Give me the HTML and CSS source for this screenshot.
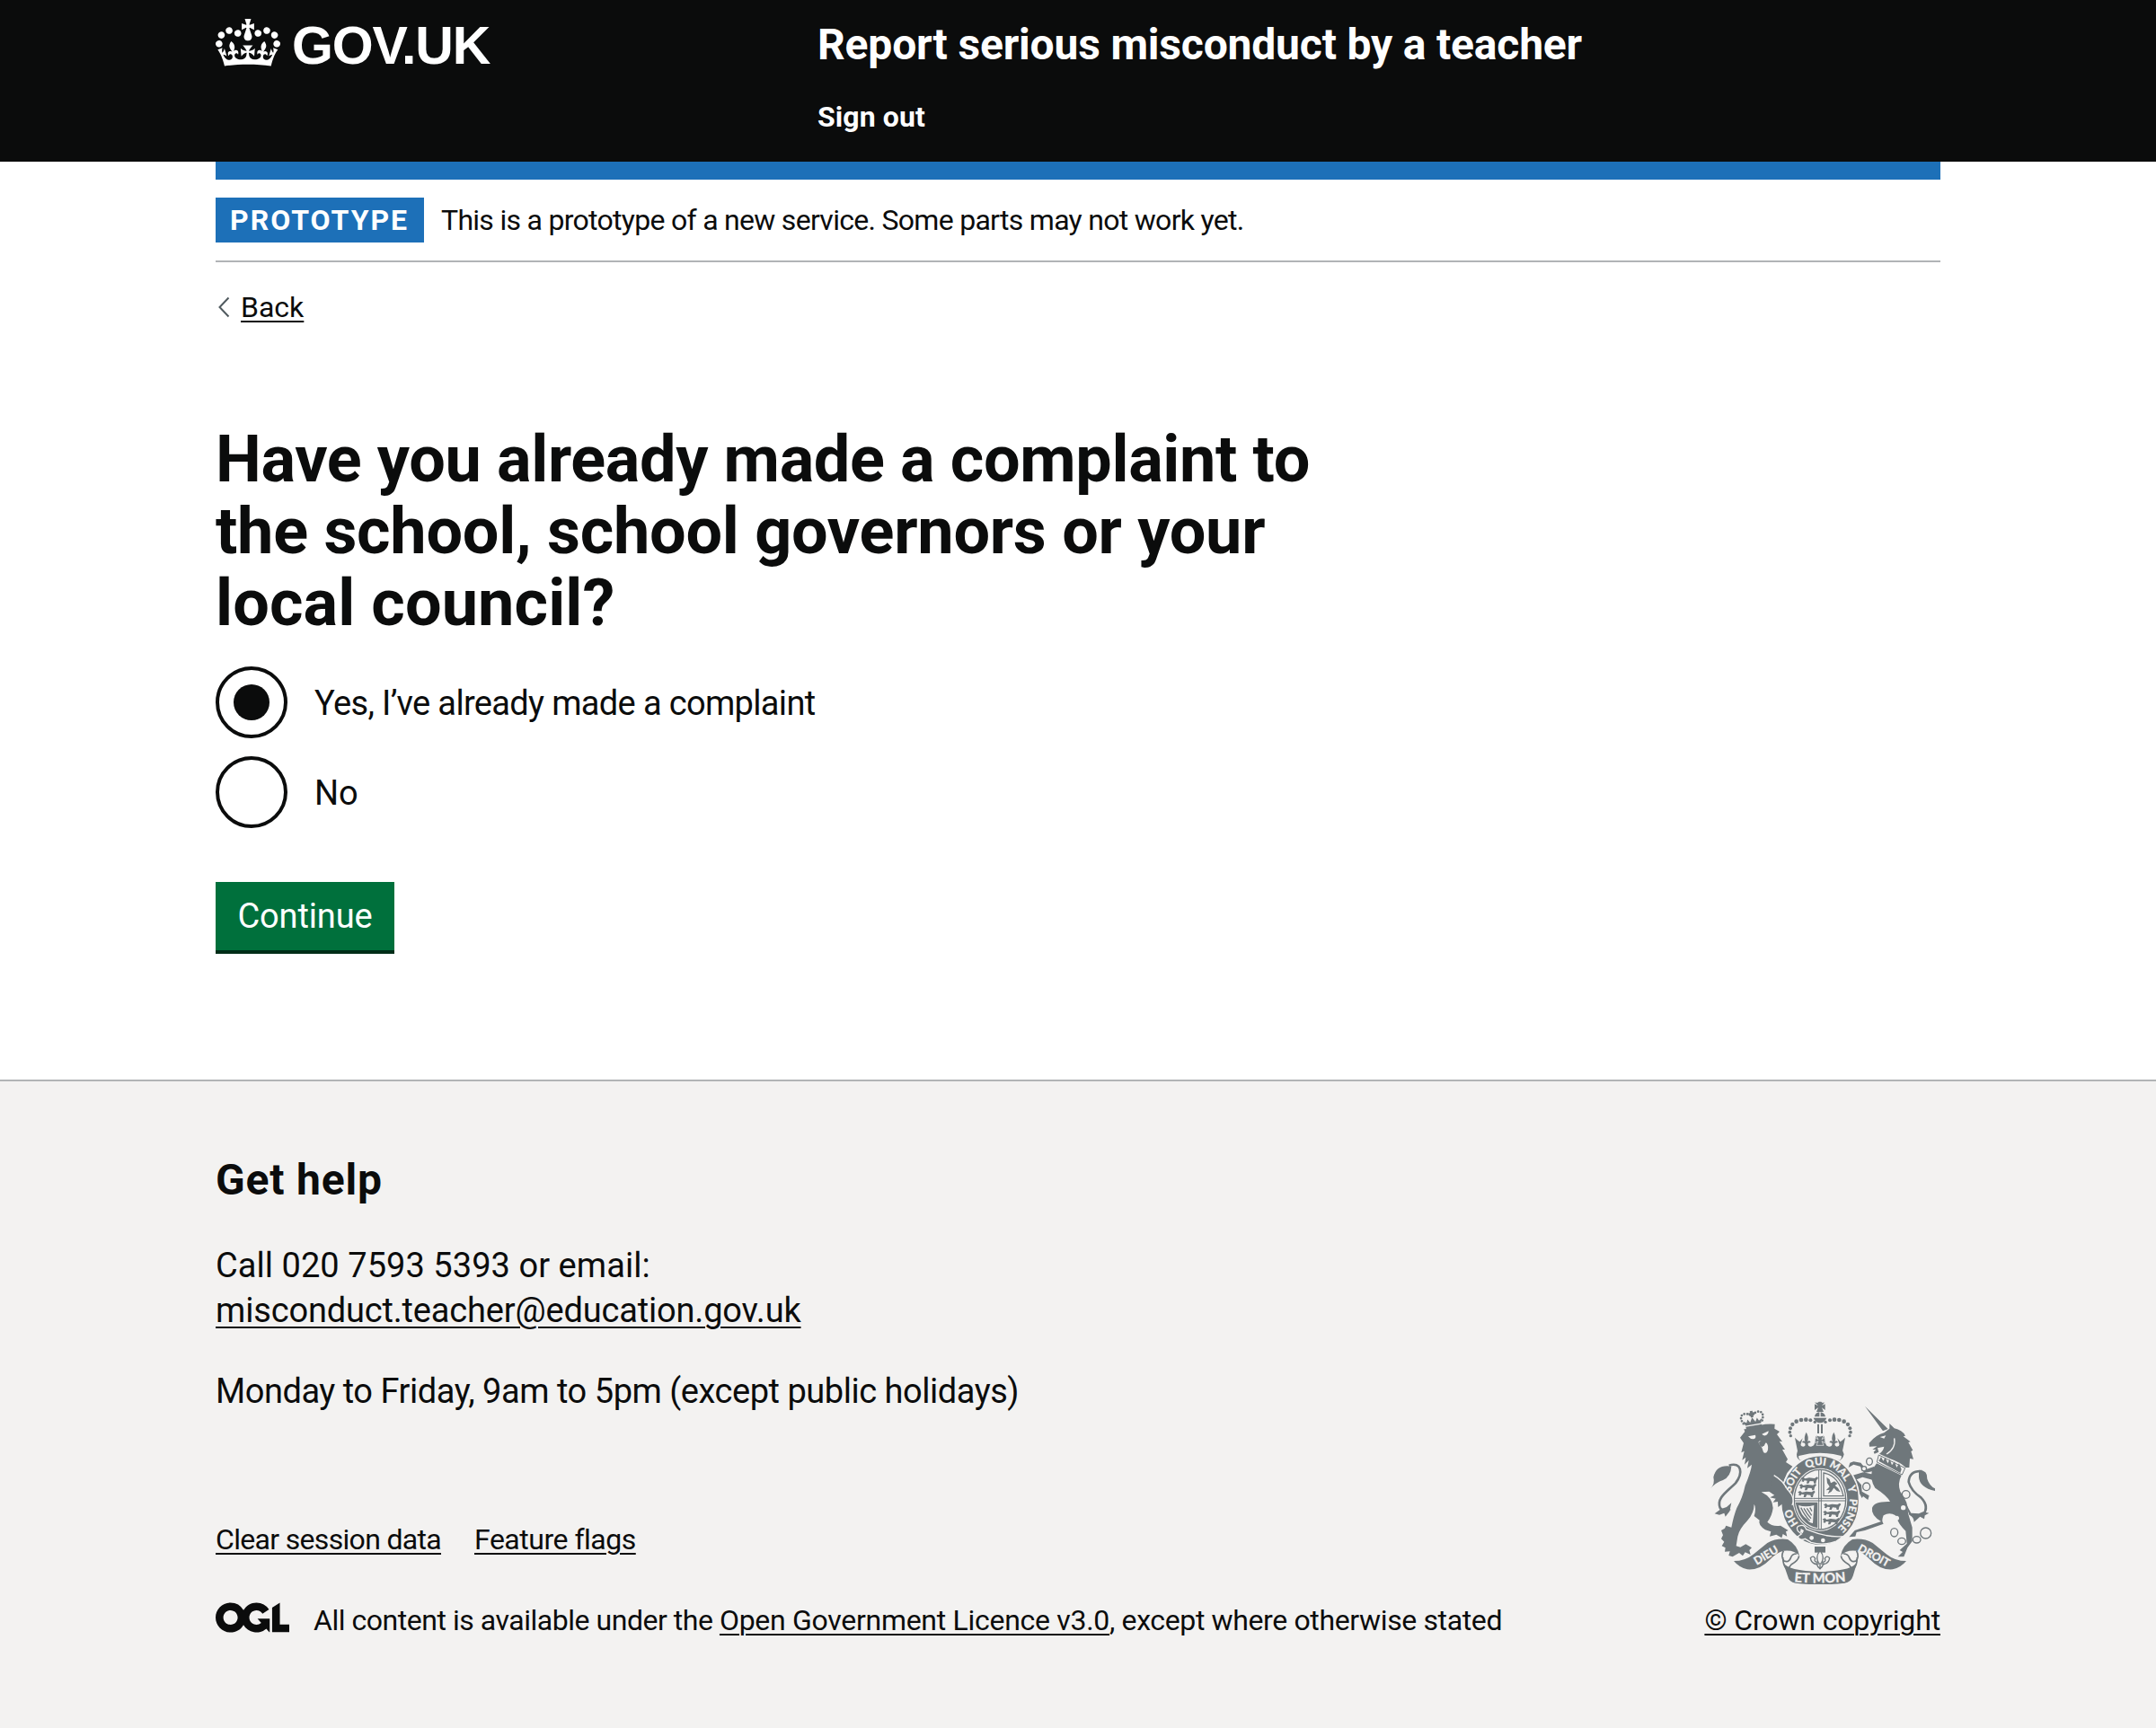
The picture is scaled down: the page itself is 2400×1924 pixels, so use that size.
FILE: index.html
```html
<!DOCTYPE html>
<html lang="en">
<head>
<meta charset="utf-8">
<title>Have you already made a complaint? – Report serious misconduct by a teacher</title>
<link rel="stylesheet" href="styles.css">
</head>
<body>
<header class="header">
  <div class="container header-row">
    <a class="logo" href="#">
      <svg class="crown" viewBox="0 0 132 97" aria-hidden="true"><path fill="currentColor" fill-rule="evenodd" d="M25 30.2c3.5 1.5 7.7-.2 9.1-3.7 1.5-3.6-.2-7.8-3.9-9.2-3.6-1.4-7.6.3-9.1 3.9-1.4 3.5.3 7.5 3.9 9zM9 39.5c3.6 1.5 7.8-.2 9.2-3.7 1.5-3.6-.2-7.8-3.9-9.1-3.6-1.5-7.6.2-9.1 3.8-1.4 3.5.3 7.5 3.8 9zM4.4 57.2c3.5 1.5 7.7-.2 9.1-3.8 1.5-3.6-.2-7.7-3.9-9.1-3.5-1.5-7.6.3-9.1 3.8-1.4 3.5.3 7.6 3.9 9.1zm38.3-21.4c3.5 1.5 7.7-.2 9.1-3.8 1.5-3.6-.2-7.7-3.9-9.1-3.6-1.5-7.6.3-9.1 3.8-1.3 3.6.4 7.7 3.9 9.1zm64.4-5.6c-3.6 1.5-7.8-.2-9.1-3.7-1.5-3.6.2-7.8 3.8-9.2 3.6-1.4 7.7.3 9.2 3.9 1.3 3.5-.4 7.5-3.9 9zm15.9 9.3c-3.6 1.5-7.7-.2-9.1-3.7-1.5-3.6.2-7.8 3.7-9.1 3.6-1.5 7.7.2 9.2 3.8 1.5 3.5-.3 7.5-3.8 9zm4.7 17.7c-3.6 1.5-7.8-.2-9.2-3.8-1.5-3.6.2-7.7 3.9-9.1 3.6-1.5 7.7.3 9.2 3.8 1.3 3.5-.4 7.6-3.9 9.1zM89.3 35.8c-3.6 1.5-7.8-.2-9.2-3.8-1.4-3.6.2-7.7 3.9-9.1 3.6-1.5 7.7.3 9.2 3.8 1.4 3.6-.3 7.7-3.9 9.1zM69.7 17.7l8.9 4.7V9.3l-8.9 2.8c-.2-.3-.5-.6-.9-.9L72.4 0H59.6l3.5 11.2c-.3.3-.6.5-.9.9l-8.8-2.8v13.1l8.8-4.7c.3.3.6.7.9.9l-5 15.4v.1c-.2.8-.4 1.6-.4 2.4 0 4.1 3.1 7.5 7 8.1h.2c.3 0 .7.1 1 .1.4 0 .7 0 1-.1h.2c4-.6 7.1-4.1 7.1-8.1 0-.8-.1-1.7-.4-2.4V34l-5.1-15.4c.4-.2.7-.6 1-.9zM66 92.8c16.9 0 32.8 1.1 47.1 3.2 4-16.9 8.9-26.7 14-33.5l-9.6-3.4c1 4.9 1.1 7.2 0 10.2-1.5-1.4-3-4.3-4.2-8.7L108.6 76c2.8-2 5-3.2 7.5-3.3-4.4 9.4-10 11.9-13.6 11.2-4.3-.8-6.3-4.6-5.6-7.9 1-4.7 5.7-5.9 8-.5 4.3-8.7-3-11.4-7.6-8.8 7.1-7.2 7.9-13.5 2.1-21.1-8 6.1-8.1 12.3-4.5 20.8-4.7-5.4-12.1-2.5-9.5 6.2 3.4-5.2 7.9-2 7.2 3.1-.6 4.3-6.4 7.8-13.5 7.2-10.3-.9-10.9-8-11.2-13.8 2.5-.5 7.1 1.8 11 7.3L80.2 60c-4.1 4.4-8 5.3-12.3 5.4 1.4-4.4 8-11.6 8-11.6H55.5s6.4 7.2 7.9 11.6c-4.2-.1-8-1-12.3-5.4l1.4 16.4c3.9-5.5 8.5-7.7 10.9-7.3-.3 5.8-.9 12.8-11.1 13.8-7.2.6-12.9-2.9-13.5-7.2-.7-5 3.8-8.3 7.1-3.1 2.7-8.7-4.6-11.6-9.4-6.2 3.7-8.5 3.6-14.7-4.6-20.8-5.8 7.6-5 13.9 2.2 21.1-4.7-2.6-11.9.1-7.7 8.8 2.3-5.5 7.1-4.2 8.1.5.7 3.3-1.3 7.1-5.7 7.9-3.5.7-9-1.8-13.5-11.2 2.5.1 4.7 1.3 7.5 3.3l-4.7-15.4c-1.2 4.4-2.7 7.2-4.3 8.7-1.1-3-.9-5.3 0-10.2l-9.5 3.4c5 6.9 9.9 16.7 14 33.5 14.8-2.1 30.8-3.2 47.7-3.2z"/></svg>
      <span class="logo-text">GOV.UK</span>
    </a>
    <div class="header-content">
      <a class="service-name" href="#">Report serious misconduct by a teacher</a>
      <a class="sign-out" href="#">Sign out</a>
    </div>
  </div>
</header>

<div class="container">
  <div class="phase-banner">
    <strong class="tag">PROTOTYPE</strong>
    <span class="phase-text">This is a prototype of a new service. Some parts may not work yet.</span>
  </div>
  <a class="back-link" href="#">
    <svg class="chevron" viewBox="0 0 14 24" aria-hidden="true"><path d="M12.5 1.5 2.5 12l10 10.500" fill="none" stroke="#505a5f" stroke-width="2"/></svg>
    <span class="back-text">Back</span>
  </a>

  <main class="main">
    <h1 class="heading"><span class="line-a">Have you already made a complaint to</span><br><span class="line-b">the school, school governors or your</span><br><span class="line-c">local council?</span></h1>
    <div class="radios">
      <label class="radio"><span class="radio-dot radio-dot-on"></span><span class="radio-label radio-label-yes">Yes, I’ve already made a complaint</span></label>
      <label class="radio"><span class="radio-dot"></span><span class="radio-label">No</span></label>
    </div>
    <button class="button" type="button">Continue</button>
  </main>
</div>

<footer class="footer">
  <div class="container footer-row">
    <div class="footer-main">
      <h2 class="footer-heading">Get help</h2>
      <p class="footer-copy">Call 020 7593 5393 or email:<br><a class="link email" href="#">misconduct.teacher@education.gov.uk</a></p>
      <p class="footer-copy hours">Monday to Friday, 9am to 5pm (except public holidays)</p>
      <div class="footer-links">
        <a class="link link-clear" href="#">Clear session data</a>
        <a class="link link-flags" href="#">Feature flags</a>
      </div>
      <div class="licence">
        <svg class="ogl" viewBox="0 0 483.2 195.7" aria-hidden="true"><path fill="currentColor" d="M421.5 142.8V.1l-50.7 32.3v161.1h112.4v-50.7zm-122.3-9.6A47.12 47.12 0 0 1 221 97.8c0-26 21.1-47.1 47.1-47.1 16.7 0 31.4 8.7 39.7 21.8l42.7-27.2A97.63 97.63 0 0 0 268.1 0c-36.5 0-68.3 20.1-85.1 49.7A98 98 0 0 0 97.8 0C43.9 0 0 43.9 0 97.8s43.9 97.8 97.8 97.8c36.5 0 68.3-20.1 85.1-49.7a97.76 97.76 0 0 0 149.6 25.4l19.4 22.2h3v-87.8h-80l24.3 27.500zM97.8 145c-26 0-47.1-21.1-47.1-47.1s21.1-47.1 47.1-47.1 47.1 21.1 47.1 47.1S123.8 145 97.8 145"/></svg>
        <p class="licence-text"><span class="licence-a">All content is available under the </span><a class="link licence-b" href="#">Open Government Licence v3.0</a><span class="licence-c">, except where otherwise stated</span></p>
      </div>
    </div>
    <div class="copyright">
      <svg class="arms" viewBox="42 28 750 612" aria-hidden="true">
        <defs>
          <path id="garter" d="M408 474A99 116 0 0 1 408 242A99 116 0 0 1 408 474"/>
          <path id="motto" d="M300 629Q408 642 516 627"/>
          <g id="pearls">
            <circle cx="391" cy="98" r="5"/><circle cx="376" cy="92" r="6"/><circle cx="361" cy="90" r="7"/><circle cx="345" cy="91" r="7"/><circle cx="329" cy="96" r="7"/><circle cx="316" cy="106" r="6.500"/><circle cx="309" cy="119" r="6"/><circle cx="307" cy="132" r="5.500"/><circle cx="310" cy="144" r="5"/>
          </g>
          <g id="crown-half">
            <path d="M324 150L332 158L340 164L350 152L345 168Q340 178 352 180Q362 178 357 168L348 166Q352 158 358 163Q353 148 362 132Q372 148 366 163Q374 158 377 166L368 168Q366 180 378 180Q390 178 390 166L394 146H408V200H334Z"/>
          </g>
          <g id="ribbon">
            <path d="M120 562Q158 562 185 540L232 502Q262 485 300 490Q332 508 339 545Q322 524 286 528Q264 533 240 558Q205 594 165 590Q138 584 120 562Z"/>
            <path d="M338 545Q336 560 312 574Q300 586 308 596M286 528Q276 548 288 562Q304 568 310 552Q314 538 330 538M284 550Q284 576 296 588" fill="none" stroke="#6f777b" stroke-width="5"/>
          </g>
          <g id="guardant">
            <path d="M0 4l8-4 6 5 14-3 18 2 8-5 4 4-6 8-2 10h-6l-2-7-12-1-4 8h-7l2-9-9-1-3 5-7-2 3-5z"/>
          </g>
        </defs>
        <g fill="#6f777b">
          <!-- lion -->
          <path d="M141 150L157 130L154 122L168 121Q215 101 257 105L256 120L273 130L264 139L282 164L272 162L291 190L282 190L300 222L294 232L316 246L298 268L288 292L300 330L268 350L238 330L212 332Q250 350 251 385Q248 412 232 432Q248 448 276 444L302 460L294 464L298 480L284 472L280 485L262 474L240 480L244 464L225 458Q200 440 206 426L188 412Q196 385 188 372Q188 402 165 428Q138 456 133 480L128 512L142 516L160 506L180 518L172 526L176 541L158 533L150 545L138 535L116 548L103 544L107 530L90 531L92 518L80 512L88 498L78 488L84 476L78 460L90 453L94 444L112 450Q120 410 130 385Q150 350 158 310Q178 262 180 240L165 252L170 226L156 240L160 216L148 225L155 195L145 200L153 168Z"/>
          <path d="M42 320Q58 304 52 282Q62 238 112 246Q110 280 84 292Q60 300 42 320ZM56 404L78 388L96 382L112 368L106 396L92 414L88 402L72 408Z"/>
          <path d="M104 243C146 230 152 268 126 302C96 332 62 352 74 384Q82 400 108 388" fill="none" stroke="#6f777b" stroke-width="8"/>
          <g transform="rotate(-10 185 100)">
            <path d="M158 106L152 90L163 97L168 86L175 98L184 82L193 98L200 86L205 97L216 90L210 106ZM158 110H212V122H158ZM180 60H189V66H195V74H189V82H180V74H174V66H180Z"/>
            <g fill="none" stroke="#6f777b" stroke-width="8" stroke-linecap="round" stroke-dasharray="0 10"><path d="M152 98C136 64 164 60 180 74"/><path d="M216 98C232 64 204 60 188 74"/></g>
          </g>
          <g fill="#f3f2f1">
            <path d="M168 146L192 141Q196 152 186 155Q176 156 168 146ZM214 138L236 128Q236 139 226 143Q218 144 214 138ZM204 170Q200 160 210 162L230 168Q238 180 232 196Q226 206 219 198L214 184Z"/>
          </g>
          <path d="M203 166Q216 156 227 166L222 176L214 182L207 176Z"/>

          <!-- unicorn -->
          <path d="M558 45L635 121L618 128ZM572 168Q596 140 622 134L640 120V103L656 119Q682 124 693 144L686 146L710 164L703 166L718 192L712 196L720 222L708 220L706 250L694 250Q676 232 640 220L606 204Q620 194 622 180L600 185L604 198L590 204L587 198L595 190L583 190L598 179L573 180Z"/>
          <path d="M656 152Q662 186 630 205" fill="none" stroke="#f3f2f1" stroke-width="4"/>
          <path d="M608 148L628 143L622 153Z" fill="#f3f2f1"/>
          <path d="M604 208L692 252L682 274L598 232Z" fill="#f3f2f1" stroke="#6f777b" stroke-width="3"/>
          <path d="M604 228L612 214L619 228L626 216L634 236L641 222L648 242L657 230L664 250L672 236L680 256L676 268Z"/>
          <path d="M597 236L680 276Q666 302 676 330Q704 366 702 402L716 450V496L700 518L688 548L668 548L684 532L674 526L698 504L694 462Q670 440 660 410Q640 398 620 410Q612 428 620 438L558 460L530 466L526 480L505 482L524 460L612 430Q578 410 582 385Q588 362 642 364Q632 344 592 318Q574 290 582 258Z"/>
          <path d="M586 262L556 268L542 246L520 240L503 250L508 234L520 230L544 234L562 256L590 246ZM586 292L550 282L530 290L546 308L548 330L572 344L568 358L552 346L548 352L530 318L508 288L512 278L552 266L590 274Z"/>
          <path d="M748 262Q706 260 704 298Q712 328 745 350Q774 380 752 408" fill="none" stroke="#6f777b" stroke-width="8"/>
          <path d="M738 258Q768 258 766 288Q774 312 792 320V328Q740 316 738 282ZM690 362L712 402L738 404L752 398L772 402L758 410L756 422L742 414L722 432Q722 416 706 408Z"/>
          <g fill="none" stroke="#6f777b" stroke-width="4">
            <ellipse cx="573" cy="230" rx="10" ry="12"/><circle cx="555" cy="254" r="8" fill="#f3f2f1"/><ellipse cx="563" cy="314" rx="12" ry="13"/><circle cx="695" cy="340" r="13"/><ellipse cx="656" cy="467" rx="12" ry="14"/><ellipse cx="681" cy="496" rx="13" ry="11"/><ellipse cx="731" cy="491" rx="13" ry="11"/><circle cx="761" cy="469" r="18"/>
          </g>
          <g fill="#f3f2f1"><circle cx="686" cy="384" r="8"/><circle cx="664" cy="419" r="8"/></g>

          <!-- crown -->
          <path d="M390 32Q400 36 404 30H412Q416 36 424 32L414 44L425 38V58L414 50L420 64H396L402 50L390 58V38L402 44ZM390 80Q392 66 406 65V80ZM410 65Q424 68 426 80H410ZM386 84H430Q424 100 408 101Q392 100 386 84Z"/>
          <path d="M402 105V136M414 105V136" stroke="#6f777b" stroke-width="6" fill="none"/>
          <use href="#pearls"/><use href="#pearls" transform="matrix(-1 0 0 1 817 0)"/>
          <use href="#crown-half"/><use href="#crown-half" transform="matrix(-1 0 0 1 816 0)"/>
          <path d="M395 142Q408 150 421 142L414 156L424 150V168L414 162L420 176H396L402 162L392 168V150L402 156Z" stroke="#f3f2f1" stroke-width="2"/>
          <path d="M334 190Q408 170 482 190L488 206Q484 222 472 228Q408 190 344 228Q330 222 330 206Z"/>
          <path d="M337 211Q408 192 479 211Q482 222 472 226Q408 204 344 226Q334 222 337 211Z" fill="#f3f2f1"/>

          <!-- garter and shield -->
          <path d="M408 210A131 150 0 0 1 408 510A131 150 0 0 1 408 210Z" stroke="#f3f2f1" stroke-width="5"/>
          <ellipse cx="408" cy="357" rx="91" ry="105" fill="#f3f2f1"/>
          <ellipse cx="408" cy="357" rx="86" ry="100" fill="none" stroke="#6f777b" stroke-width="4"/>
          <path d="M404 258V454M412 258V454M322 353H494M322 361H494" stroke="#6f777b" stroke-width="3"/>
          <use href="#guardant" x="344" y="282"/><use href="#guardant" x="338" y="305"/><use href="#guardant" x="334" y="328"/>
          <use href="#guardant" x="420" y="370"/><use href="#guardant" x="418" y="394"/><use href="#guardant" x="416" y="419"/>
          <path d="M420 268Q470 276 486 345H420Z" fill="none" stroke="#6f777b" stroke-width="4"/>
          <path d="M430 282L440 290L444 302L456 296L466 304L458 310L468 318L476 332L464 328L454 318L446 330L434 338L440 324L428 326L440 314L432 302Z"/>
          <path d="M326 366H400V452Q340 440 326 366Z"/>
          <path d="M336 376Q360 384 388 376L384 436Q370 434 366 424Q344 410 336 376Z" fill="#f3f2f1"/>
          <path d="M344 384Q358 412 374 428M354 386Q366 408 378 420M364 386L380 410M374 384L381 396" fill="none" stroke="#6f777b" stroke-width="4"/>
          <g class="arms-text" font-size="35">
            <text><textPath href="#garter" startOffset="16.500%">HO</textPath></text>
            <text><textPath href="#garter" startOffset="34.500%">SOIT</textPath></text>
            <text><textPath href="#garter" startOffset="48%">QUI</textPath></text>
            <text><textPath href="#garter" startOffset="60%">MAL</textPath></text>
            <text><textPath href="#garter" startOffset="70%">Y</textPath></text>
            <text><textPath href="#garter" startOffset="82.500%">PENSE</textPath></text>
          </g>
          <path d="M334 462Q326 446 342 444Q356 440 362 456L378 462Q430 484 486 480L462 496Q420 512 378 500L358 488Q340 496 334 480L346 472Z" stroke="#f3f2f1" stroke-width="4"/>
          <g fill="#f3f2f1"><circle cx="380" cy="485" r="7"/><circle cx="418" cy="493" r="7"/><path d="M344 454l10 6-4 10-8-4z"/></g>
          <!-- lion's foreleg, resting on the garter -->
          <path d="M254 278Q282 294 294 320L312 342Q320 360 314 374L304 388L299 374L290 386L283 371L268 382L267 364L251 366L260 354L241 350L256 342L238 328Z"/>
          <path d="M254 276Q284 294 296 318L314 342Q322 360 315 376" fill="none" stroke="#f3f2f1" stroke-width="4"/>

          <!-- motto ribbon -->
          <use href="#ribbon"/><use href="#ribbon" transform="matrix(-1 0 0 1 816 0)"/>
          <path d="M284 566Q300 596 408 598Q516 596 532 566L518 612Q512 632 490 636Q408 646 326 636Q304 632 300 612Z"/>
          <path d="M390 514H426V534H390Z"/>
          <path d="M408 528Q424 546 414 566Q430 566 424 554Q430 542 440 552Q438 570 418 574Q416 584 408 588Q400 584 398 574Q378 570 376 552Q386 542 392 554Q386 566 402 566Q392 546 408 528Z" fill="#f3f2f1" stroke="#6f777b" stroke-width="4"/>
          <path d="M394 571H422M408 574V590" stroke="#6f777b" stroke-width="4"/>
          <g class="arms-text">
            <text font-size="37" transform="translate(234 554) rotate(-31)">DIEU</text>
            <text font-size="37" transform="translate(582 555) rotate(29)">DROIT</text>
            <text font-size="44"><textPath href="#motto" startOffset="50%">ET MON</textPath></text>
          </g>
        </g>
      </svg>
      <a class="link crown-link" href="#">© Crown copyright</a>
    </div>
  </div>
</footer>
</body>
</html>
```
FILE: styles.css
```css
* { box-sizing: border-box; }

body {
  margin: 0;
  background: #fff;
  color: #0b0c0c;
  font-family: Roboto, "Liberation Sans", sans-serif;
  font-size: 32px;
  line-height: 40px;
  white-space: nowrap;
}

h1, h2, p { margin: 0; }

.container { width: 1920px; margin: 0 auto; }

.link, .back-text {
  color: #0b0c0c;
  text-decoration: underline;
  text-decoration-thickness: 2px;
  text-underline-offset: 4px;
}

/* Header */
.header { height: 180px; background: #0b0c0c; color: #fff; }
.header a { color: #fff; text-decoration: none; }
.header-row { display: grid; grid-template-columns: 670px 1fr; align-items: start; }
.logo { display: flex; align-items: flex-start; gap: 13px; padding-top: 21px; }
.crown { width: 72px; height: 53px; }
.logo-text {
  font-family: "Liberation Sans", Arial, sans-serif;
  font-size: 59px;
  font-weight: 700;
  line-height: 60px;
  letter-spacing: -1.2px;
}
.header-content { display: flex; flex-direction: column; align-items: flex-start; gap: 30px; padding-top: 20px; }
.service-name { font-size: 48px; font-weight: 700; line-height: 60px; letter-spacing: -.18px; }
.sign-out { font-weight: 700; letter-spacing: .1px; }

/* Phase banner */
.phase-banner {
  display: flex;
  gap: 19px;
  border-top: 20px solid #1d70b8;
  border-bottom: 2px solid #b1b4b6;
  padding: 20px 0;
  line-height: 50px;
}
.tag { width: 232px; padding-left: 16px; background: #1d70b8; color: #fff; font-weight: 700; letter-spacing: 2px; }
.phase-text { letter-spacing: -.71px; }

.back-link { display: flex; width: fit-content; align-items: center; gap: 12px; margin: 30px 0 0 2px; text-decoration: none; }
.chevron { width: 14px; height: 24px; }

/* Question */
.main { display: flex; flex-direction: column; align-items: flex-start; padding-top: 110px; }
.heading { font-size: 72px; font-weight: 700; line-height: 80px; }
.line-a { letter-spacing: -.35px; }
.line-b { letter-spacing: -.27px; }
.line-c { letter-spacing: .1px; }
.radios { display: flex; flex-direction: column; gap: 20px; margin-top: 30px; }
.radio { display: flex; gap: 30px; height: 80px; font-size: 38px; line-height: 82px; }
.radio-dot { display: grid; place-items: center; width: 80px; height: 80px; border: 4px solid #0b0c0c; border-radius: 50%; }
.radio-dot-on::before { content: ""; width: 40px; height: 40px; border-radius: 50%; background: #0b0c0c; }
.radio-label-yes { letter-spacing: -.66px; }
.button {
  width: 199px;
  height: 80px;
  margin-top: 60px;
  padding: 1px 0 0;
  border: 0;
  border-bottom: 4px solid #002d18;
  background: #00703c;
  color: #fff;
  font: 400 38px/75px Roboto, "Liberation Sans", sans-serif;
  letter-spacing: -.14px;
}

/* Footer */
.footer { margin-top: 140px; border-top: 2px solid #b1b4b6; background: #f3f2f1; }
.footer-row { display: flex; justify-content: space-between; align-items: flex-end; height: 720px; padding-bottom: 100px; }
.footer-main { display: flex; flex-direction: column; align-items: flex-start; }
.footer-heading { margin-bottom: 40px; font-size: 48px; font-weight: 700; line-height: 60px; letter-spacing: .8px; }
.footer-copy { margin-bottom: 40px; font-size: 38px; line-height: 50px; letter-spacing: .05px; }
.email { letter-spacing: -.17px; text-underline-offset: 5px; }
.hours { letter-spacing: -.47px; margin-bottom: 120px; }
.footer-links { display: flex; gap: 37px; margin-bottom: 50px; }
.link-clear { letter-spacing: -.68px; }
.link-flags { letter-spacing: -.49px; }
.licence { display: flex; gap: 27px; }
.ogl { width: 82px; height: 34px; }
.licence-text { white-space: pre; }
.licence-a { letter-spacing: -.47px; }
.licence-b { letter-spacing: -.29px; }
.licence-c { letter-spacing: -.37px; }
.copyright { display: flex; flex-direction: column; align-items: center; gap: 20px; }
.arms { width: 250px; height: 204px; }
.arms-text { fill: #f3f2f1; stroke: #f3f2f1; stroke-width: 1; font-family: Lato, "Liberation Sans", sans-serif; font-weight: 700; text-anchor: middle; }
.crown-link { letter-spacing: -.14px; }
```
